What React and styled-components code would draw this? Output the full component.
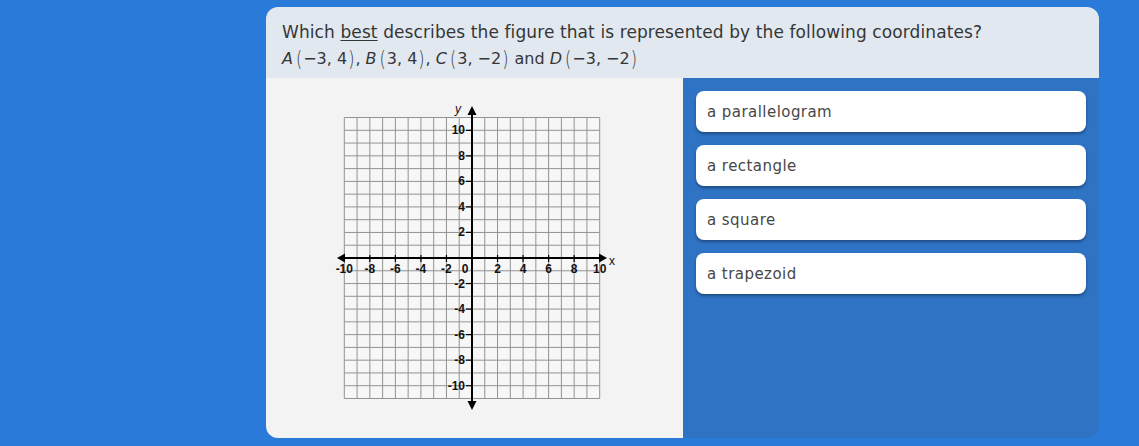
import React from 'react';
import styled, { createGlobalStyle } from 'styled-components';

const GlobalStyle = createGlobalStyle`
	html, body {
		margin: 0;
		padding: 0;
		background: #2a7bd9;
	}
	body {
		font-family: 'DejaVu Sans', 'Liberation Sans', sans-serif;
	}
`;

const Page = styled.div`
	width: 1139px;
	height: 446px;
	box-sizing: border-box;
	padding: 7px 40px 8px 266px;
	display: flex;
`;

const Card = styled.div`
	flex: 1;
	display: flex;
	flex-direction: column;
	border-radius: 12px;
	overflow: hidden;
`;

const Question = styled.div`
	height: 71px;
	box-sizing: border-box;
	padding: 14px 16px 0 16px;
	background: #e1e8f0;
	color: #363636;
	font-size: 17px;
	line-height: 22px;
	letter-spacing: 0.1px;
`;

const Line = styled.div`
	white-space: nowrap;
`;

const MathLine = styled(Line)`
	margin-top: 5px;
	font-size: 16px;
	letter-spacing: 0;
`;

const Underline = styled.span`
	text-decoration: underline;
	text-underline-offset: 2px;
`;

const MathVar = styled.span`
	font-style: italic;
	margin-right: 2px;
`;

const Paren = styled.span`
	display: inline-block;
	font-weight: 300;
	transform: scale(1, 1.35);
	padding: 0 1px;
`;

const Body = styled.div`
	flex: 1;
	display: flex;
`;

const GraphPanel = styled.div`
	width: 417px;
	box-sizing: border-box;
	padding-right: 6px;
	background: #f3f3f3;
	display: flex;
	align-items: center;
	justify-content: center;
`;

const AnswerPanel = styled.div`
	flex: 1;
	background: #2e73c4;
	padding: 13px 13px 0 13px;
	display: flex;
	flex-direction: column;
	gap: 13px;
`;

const Answer = styled.button`
	height: 41px;
	border: none;
	border-radius: 8px;
	background: #ffffff;
	box-shadow: 0 2px 3px rgba(0, 0, 0, 0.35);
	text-align: left;
	padding: 0 11px;
	font-family: 'DejaVu Sans', 'Liberation Sans', sans-serif;
	font-size: 15px;
	letter-spacing: 0.45px;
	color: #474747;
	cursor: pointer;
`;

const U = 12.77;
const CX = 150;
const CY = 160;

const labelStyle = {
	fontFamily: "'Liberation Sans', 'DejaVu Sans', sans-serif",
	fontSize: 12,
	fontWeight: 700,
	fill: '#111',
};

const CoordinateGrid = () => {
	const verticals = [];
	for (let i = -10; i <= 10; i++) verticals.push(i);
	const horizontals = [];
	for (let j = -11; j <= 11; j++) horizontals.push(j);
	const evens = [-10, -8, -6, -4, -2, 2, 4, 6, 8, 10];

	return (
		<svg width="300" height="320" viewBox="0 0 300 320">
			<rect
				x={CX - 10 * U}
				y={CY - 11 * U}
				width={20 * U}
				height={22 * U}
				fill="#f7f7f7"
			/>
			{verticals.map((i) => (
				<line
					key={'v' + i}
					x1={CX + i * U}
					x2={CX + i * U}
					y1={CY - 11 * U}
					y2={CY + 11 * U}
					stroke="#939393"
					strokeWidth="1"
				/>
			))}
			{horizontals.map((j) => (
				<line
					key={'h' + j}
					x1={CX - 10 * U}
					x2={CX + 10 * U}
					y1={CY + j * U}
					y2={CY + j * U}
					stroke="#939393"
					strokeWidth="1"
				/>
			))}

			{/* axes */}
			<line x1={CX - 129} x2={CX + 129} y1={CY} y2={CY} stroke="#000" strokeWidth="2" />
			<line x1={CX} x2={CX} y1={CY - 145} y2={CY + 145} stroke="#000" strokeWidth="2" />
			<polygon points={`${CX - 135},${CY} ${CX - 127},${CY - 4.5} ${CX - 127},${CY + 4.5}`} fill="#000" />
			<polygon points={`${CX + 135},${CY} ${CX + 127},${CY - 4.5} ${CX + 127},${CY + 4.5}`} fill="#000" />
			<polygon points={`${CX},${CY - 152} ${CX - 4.5},${CY - 143} ${CX + 4.5},${CY - 143}`} fill="#000" />
			<polygon points={`${CX},${CY + 152} ${CX - 4.5},${CY + 143} ${CX + 4.5},${CY + 143}`} fill="#000" />

			{/* ticks and labels */}
			{evens.map((v) => (
				<g key={'x' + v}>
					<line
						x1={CX + v * U}
						x2={CX + v * U}
						y1={CY - 3}
						y2={CY + 4}
						stroke="#000"
						strokeWidth="1.2"
					/>
					<text x={CX + v * U} y={CY + 15} textAnchor="middle" style={labelStyle}>
						{v < 0 ? '-' + Math.abs(v) : v}
					</text>
				</g>
			))}
			{evens.map((v) => (
				<g key={'y' + v}>
					<line
						x1={CX - 6}
						x2={CX}
						y1={CY - v * U}
						y2={CY - v * U}
						stroke="#000"
						strokeWidth="1.2"
					/>
					<text x={CX - 7} y={CY - v * U + 4} textAnchor="end" style={labelStyle}>
						{v < 0 ? '-' + Math.abs(v) : v}
					</text>
				</g>
			))}
			<text x={CX - 7} y={CY + 15} textAnchor="middle" style={labelStyle}>
				0
			</text>
			<text x={CX + 140} y={CY + 7} textAnchor="middle" style={{ ...labelStyle, fontWeight: 400 }}>
				x
			</text>
			<text x={CX - 14} y={CY - 145} textAnchor="middle" style={{ ...labelStyle, fontStyle: 'italic', fontWeight: 400 }}>
				y
			</text>
		</svg>
	);
};

const Point = ({ name, x, y }) => (
	<>
		<MathVar>{name}</MathVar>
		<Paren>(</Paren>
		{x}, {y}
		<Paren>)</Paren>
	</>
);

const answers = ['a parallelogram', 'a rectangle', 'a square', 'a trapezoid'];

export default function App() {
	return (
		<>
			<GlobalStyle />
			<Page>
				<Card>
					<Question>
						<Line>
							Which <Underline>best</Underline> describes the figure that is represented by the
							following coordinates?
						</Line>
						<MathLine>
							<Point name="A" x="−3" y="4" />, <Point name="B" x="3" y="4" />,{' '}
							<Point name="C" x="3" y="−2" /> and <Point name="D" x="−3" y="−2" />
						</MathLine>
					</Question>
					<Body>
						<GraphPanel>
							<CoordinateGrid />
						</GraphPanel>
						<AnswerPanel>
							{answers.map((a) => (
								<Answer key={a}>{a}</Answer>
							))}
						</AnswerPanel>
					</Body>
				</Card>
			</Page>
		</>
	);
}
